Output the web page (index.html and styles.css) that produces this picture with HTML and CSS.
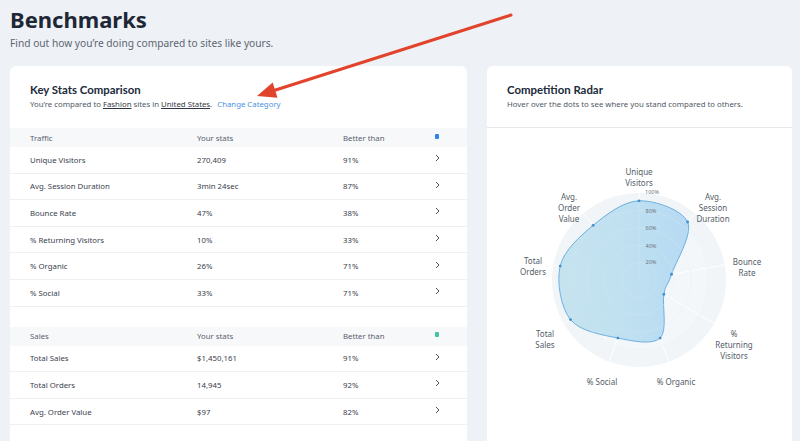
FILE: index.html
```html
<!DOCTYPE html>
<html lang="en">
<head>
<meta charset="utf-8">
<title>Benchmarks</title>
<link rel="stylesheet" href="styles.css">
</head>
<body>
<div class="page">
  <h1 class="title">Benchmarks</h1>
  <p class="lead">Find out how you’re doing compared to sites like yours.</p>

  <div class="cards">
    <section class="card">
      <div class="card-head">
        <h2>Key Stats Comparison</h2>
        <p>You’re compared to <u>Fashion</u> sites in <u>United States</u>. <a class="link">Change Category</a></p>
      </div>

      <div class="group">
        <div class="row head"><span>Traffic</span><span>Your stats</span><span>Better than</span><span class="sq blue"></span></div>
        <div class="row"><span>Unique Visitors</span><span>270,409</span><span>91%</span><svg class="chev" viewBox="0 0 5 8"><path d="M1 1l3 3-3 3"/></svg></div>
        <div class="row"><span>Avg. Session Duration</span><span>3min 24sec</span><span>87%</span><svg class="chev" viewBox="0 0 5 8"><path d="M1 1l3 3-3 3"/></svg></div>
        <div class="row"><span>Bounce Rate</span><span>47%</span><span>38%</span><svg class="chev" viewBox="0 0 5 8"><path d="M1 1l3 3-3 3"/></svg></div>
        <div class="row"><span>% Returning Visitors</span><span>10%</span><span>33%</span><svg class="chev" viewBox="0 0 5 8"><path d="M1 1l3 3-3 3"/></svg></div>
        <div class="row"><span>% Organic</span><span>26%</span><span>71%</span><svg class="chev" viewBox="0 0 5 8"><path d="M1 1l3 3-3 3"/></svg></div>
        <div class="row"><span>% Social</span><span>33%</span><span>71%</span><svg class="chev" viewBox="0 0 5 8"><path d="M1 1l3 3-3 3"/></svg></div>
      </div>

      <div class="group sales">
        <div class="row head"><span>Sales</span><span>Your stats</span><span>Better than</span><span class="sq teal"></span></div>
        <div class="row"><span>Total Sales</span><span>$1,450,161</span><span>91%</span><svg class="chev" viewBox="0 0 5 8"><path d="M1 1l3 3-3 3"/></svg></div>
        <div class="row"><span>Total Orders</span><span>14,945</span><span>92%</span><svg class="chev" viewBox="0 0 5 8"><path d="M1 1l3 3-3 3"/></svg></div>
        <div class="row"><span>Avg. Order Value</span><span>$97</span><span>82%</span><svg class="chev" viewBox="0 0 5 8"><path d="M1 1l3 3-3 3"/></svg></div>
      </div>
    </section>

    <section class="card">
      <div class="card-head divided">
        <h2>Competition Radar</h2>
        <p>Hover over the dots to see where you stand compared to others.</p>
      </div>
      <svg class="radar" viewBox="487 129 305 312" width="305" height="312">
        <defs>
          <linearGradient id="area" gradientUnits="userSpaceOnUse" x1="560" y1="0" x2="700" y2="0">
            <stop offset="0" stop-color="#c2e2ee"/>
            <stop offset="0.5" stop-color="#bbdef0"/>
            <stop offset="1" stop-color="#afd6f3"/>
          </linearGradient>
        </defs>
        <circle cx="639" cy="281" r="87" fill="#f1f5f8"/>
        <circle cx="639" cy="281" r="69.6" fill="#f4f7fa" stroke="#fff" stroke-width="1"/>
        <circle cx="639" cy="281" r="52.2" fill="none" stroke="#fff" stroke-width="1"/>
        <circle cx="639" cy="281" r="34.8" fill="none" stroke="#fff" stroke-width="1"/>
        <circle cx="639" cy="281" r="17.4" fill="none" stroke="#fff" stroke-width="1"/>
        <g stroke="#fff" stroke-width="1">
          <line x1="639" y1="281" x2="639" y2="194"/>
          <line x1="639" y1="281" x2="694.9" y2="214.4"/>
          <line x1="639" y1="281" x2="724.7" y2="265.9"/>
          <line x1="639" y1="281" x2="714.3" y2="324.5"/>
          <line x1="639" y1="281" x2="668.8" y2="362.8"/>
          <line x1="639" y1="281" x2="609.2" y2="362.8"/>
          <line x1="639" y1="281" x2="563.7" y2="324.5"/>
          <line x1="639" y1="281" x2="553.3" y2="265.9"/>
          <line x1="639" y1="281" x2="583.1" y2="214.4"/>
        </g>
        <path d="M639,201.83 C654.75,201.28 682.22,210.78 687.65,223.02 C693.08,235.26 675.53,263.2 671.56,275.26 C667.6,287.32 665.77,284.73 663.86,295.36 C661.96,305.99 667.8,331.77 660.13,339.05 C652.47,346.33 632.82,342.13 617.87,339.05 C602.92,335.97 580.06,332.58 570.44,320.59 C560.83,308.6 556.4,282.81 560.18,267.1 C563.96,251.39 580,237.23 593.14,226.35 C606.28,215.47 623.25,202.39 639,201.83 Z" fill="url(#area)" fill-opacity="0.92" stroke="#6cb0e0" stroke-width="1"/>
        <g stroke="#d2e6f3" stroke-width="0.6" opacity="0.7">
          <line x1="639" y1="281" x2="639" y2="202"/>
          <circle cx="639" cy="281" r="17.4" fill="none"/>
          <circle cx="639" cy="281" r="34.8" fill="none"/>
          <circle cx="639" cy="281" r="52.2" fill="none"/>
          <circle cx="639" cy="281" r="69.6" fill="none"/>
        </g>
        <g fill="#3f8fd0">
          <circle cx="639" cy="201.83" r="1.4"/>
          <circle cx="687.65" cy="223.02" r="1.4"/>
          <circle cx="671.56" cy="275.26" r="1.4"/>
          <circle cx="663.86" cy="295.36" r="1.4"/>
          <circle cx="660.13" cy="339.05" r="1.4"/>
          <circle cx="617.87" cy="339.05" r="1.4"/>
          <circle cx="570.44" cy="320.59" r="1.4"/>
          <circle cx="560.18" cy="267.1" r="1.4"/>
          <circle cx="593.14" cy="226.35" r="1.4"/>
        </g>
        <g class="scale" text-anchor="middle">
          <text x="652" y="195">100%</text>
          <text x="651" y="214">80%</text>
          <text x="651" y="231">60%</text>
          <text x="651" y="249">40%</text>
          <text x="651" y="265">20%</text>
        </g>
        <g class="axis" text-anchor="middle">
          <text x="639" y="176"><tspan x="639">Unique</tspan><tspan x="639" dy="10.5">Visitors</tspan></text>
          <text x="713" y="201"><tspan x="713">Avg.</tspan><tspan x="713" dy="11">Session</tspan><tspan x="713" dy="11">Duration</tspan></text>
          <text x="747" y="266"><tspan x="747">Bounce</tspan><tspan x="747" dy="11">Rate</tspan></text>
          <text x="734" y="338"><tspan x="734">%</tspan><tspan x="734" dy="11">Returning</tspan><tspan x="734" dy="11">Visitors</tspan></text>
          <text x="676" y="386">% Organic</text>
          <text x="602" y="386">% Social</text>
          <text x="545" y="338"><tspan x="545">Total</tspan><tspan x="545" dy="11">Sales</tspan></text>
          <text x="533" y="265"><tspan x="533">Total</tspan><tspan x="533" dy="11">Orders</tspan></text>
          <text x="569" y="201"><tspan x="569">Avg.</tspan><tspan x="569" dy="11">Order</tspan><tspan x="569" dy="11">Value</tspan></text>
        </g>
      </svg>
    </section>
  </div>

  <svg class="arrow" viewBox="0 0 800 441" width="800" height="441">
    <line x1="511" y1="15" x2="274" y2="90.5" stroke="#e2432c" stroke-width="3" stroke-linecap="round"/>
    <polygon points="257,96 272.7,82.6 277.5,97.8" fill="#e2432c"/>
  </svg>
</div>
</body>
</html>
```

FILE: styles.css
```css
* { box-sizing: border-box; }

html, body {
  margin: 0;
  padding: 0;
  background: #eef1f5;
  overflow: hidden;
}

body {
  font-family: "Noto Sans", "Open Sans", sans-serif;
  color: #333b48;
  width: 800px;
  height: 441px;
}

.page {
  position: relative;
  padding: 5px 8px 0 10px;
  height: 441px;
}

.title {
  margin: 0;
  font-size: 22px;
  line-height: 28px;
  font-weight: 700;
  color: #1d2736;
}

.lead {
  margin: 3px 0 0;
  font-size: 10.2px;
  line-height: 14px;
  color: #5c6573;
}

.cards {
  margin-top: 16px;
  display: grid;
  grid-template-columns: 457px 305px;
  column-gap: 20px;
}

.card {
  background: #fff;
  border-radius: 6px;
  height: 420px;
  overflow: hidden;
}

.card-head {
  padding: 17px 20px 18px;
}

.card-head.divided {
  border-bottom: 1px solid #e5e8ed;
  padding-bottom: 17px;
}

.card-head h2 {
  margin: 0;
  font-family: "Lato", "Noto Sans", sans-serif;
  font-size: 11.4px;
  line-height: 14px;
  font-weight: 700;
  color: #202a39;
}

.card-head p {
  margin: 1px 0 0;
  font-size: 7.8px;
  line-height: 12px;
  color: #4f5866;
}

.card-head u {
  color: #2f3744;
  text-underline-offset: 1px;
}

.link {
  color: #4a90e2;
  margin-left: 3px;
}

.group.sales {
  margin-top: 20px;
}

.row {
  display: grid;
  grid-template-columns: 167px 146px 92px 20px;
  align-items: center;
  padding-left: 20px;
  height: 26.6px;
  border-bottom: 1px solid #eef0f3;
  font-size: 7.8px;
  color: #3a414d;
}

.row.head {
  height: 19px;
  background: #f6f8fa;
  border-bottom: none;
  color: #59616d;
}

.sq {
  width: 4px;
  height: 5px;
  border-radius: 1px;
  margin-top: -3px;
}

.sq.blue { background: #2c86e8; }
.sq.teal { background: #48c2a6; }

.chev {
  width: 5px;
  height: 8px;
  margin-top: -3px;
  fill: none;
  stroke: #4a505a;
  stroke-width: 1;
}

.radar {
  display: block;
}

.scale text {
  font-size: 5.5px;
  fill: #6c7480;
}

.axis text {
  font-size: 8px;
  fill: #545c68;
}

.arrow {
  position: absolute;
  left: 0;
  top: 0;
  pointer-events: none;
}
```
